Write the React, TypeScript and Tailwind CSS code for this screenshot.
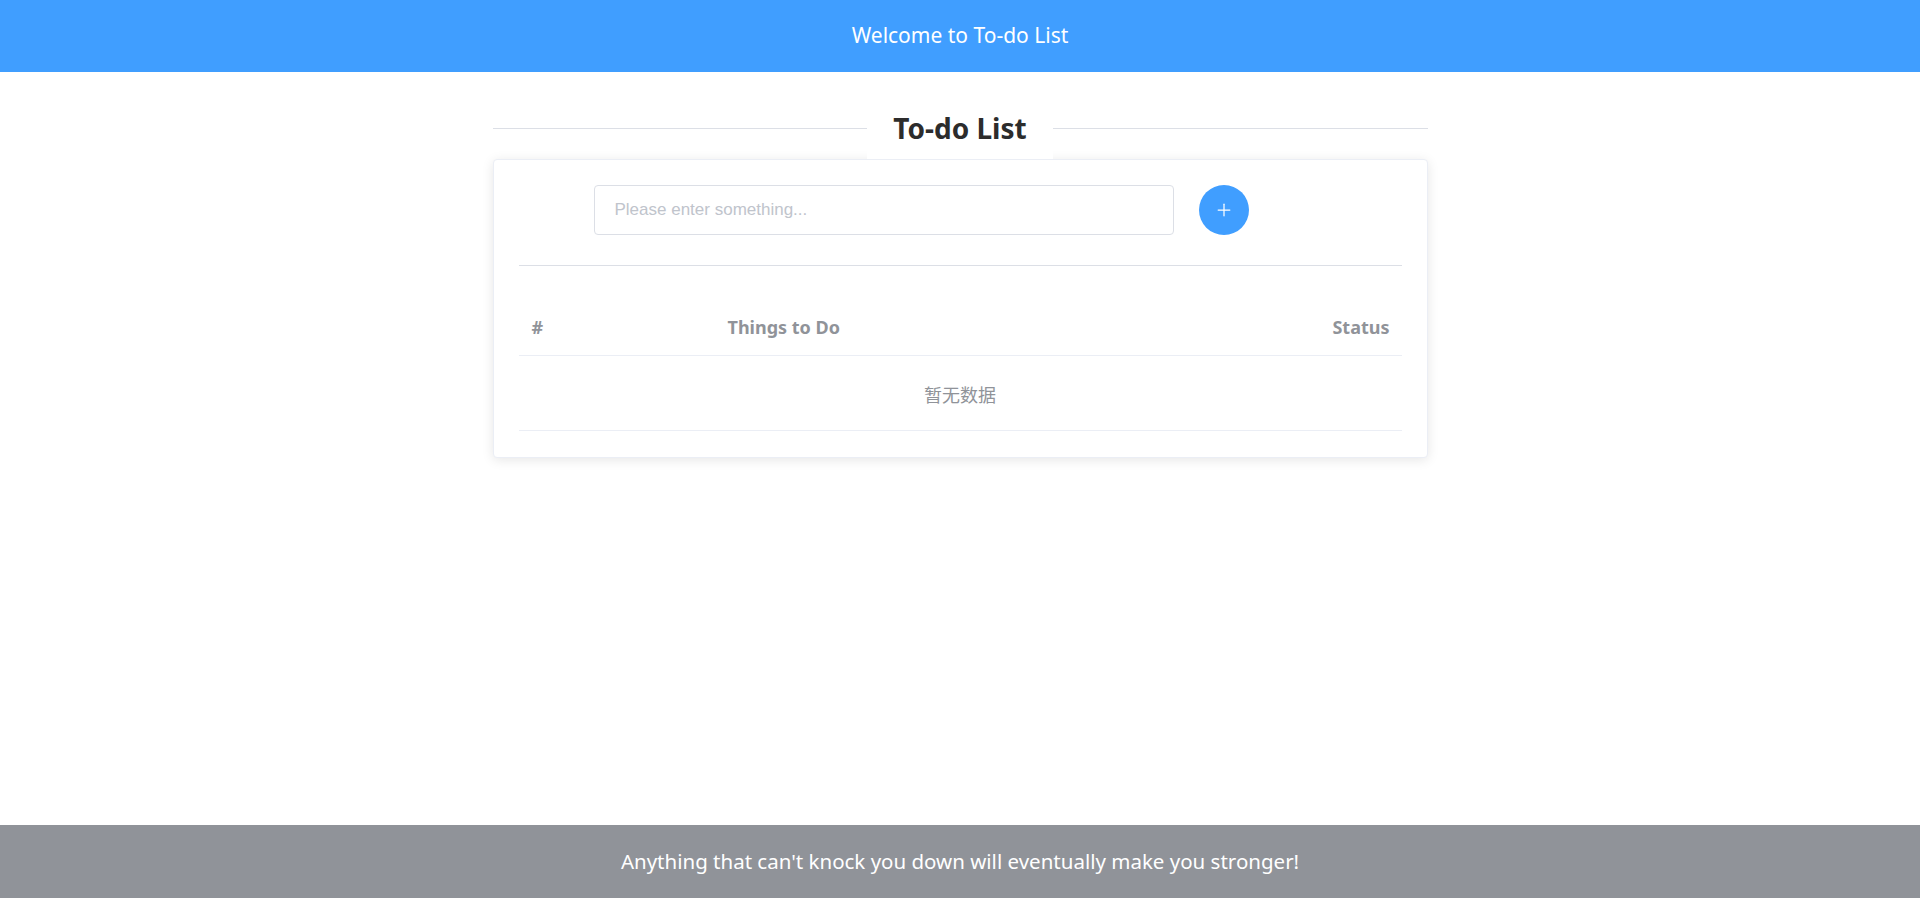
import { Plus } from 'lucide-react';

const font = { fontFamily: '"Noto Sans", "Noto Sans CJK SC", sans-serif' };

const TodoInput = () => (
  <div className="flex items-center pl-[75px] h-[50px]">
    <input
      type="text"
      placeholder="Please enter something..."
      className="w-[580px] h-[50px] rounded-[4px] border border-[#dcdfe6] px-[20px] text-[17px] text-[#606266] placeholder:text-[#c0c4cc] outline-none font-['Liberation_Sans',sans-serif]"
    />
    <button className="ml-[25px] w-[50px] h-[50px] rounded-full bg-[#409eff] flex items-center justify-center text-white">
      <Plus size={20} strokeWidth={1.5} />
    </button>
  </div>
);

const TodoTable = () => (
  <div className="mt-[29px] text-[#909399]">
    <div className="flex items-center h-[61px] pt-[5px] border-b border-[#ebeef5] text-[18px] font-bold">
      <div className="w-[209px] pl-[13px]">#</div>
      <div className="flex-1">Things to Do</div>
      <div className="pr-[12px]">Status</div>
    </div>
    <div className="flex items-center justify-center h-[75px] pt-[5px] border-b border-[#ebeef5] text-[18px]">
      暂无数据
    </div>
  </div>
);

export default function App() {
  return (
    <div className="min-h-screen flex flex-col bg-white" style={font}>
      <header className="h-[72px] bg-[#409eff] flex items-center justify-center text-white text-[21px]">
        Welcome to To-do List
      </header>

      <main className="w-[935px] mx-auto">
        <div className="mt-[25px] h-[62px] flex items-center">
          <div className="flex-1 h-px bg-[#dcdfe6]" />
          <h1 className="relative z-10 h-full px-[26px] bg-white flex items-center text-[28px] font-bold text-[#2c2c2c]">
            To-do List
          </h1>
          <div className="flex-1 h-px bg-[#dcdfe6]" />
        </div>

        <div className="rounded-[4px] border border-[#ebeef5] bg-white shadow-[0_2px_12px_0_rgba(0,0,0,0.1)] px-[25px] pt-[25px] pb-[26px]">
          <TodoInput />
          <div className="mt-[30px] h-px bg-[#dcdfe6]" />
          <TodoTable />
        </div>
      </main>

      <footer className="mt-auto h-[73px] bg-[#909399] flex items-center justify-center text-white text-[20.5px]">
        Anything that can't knock you down will eventually make you stronger!
      </footer>
    </div>
  );
}
